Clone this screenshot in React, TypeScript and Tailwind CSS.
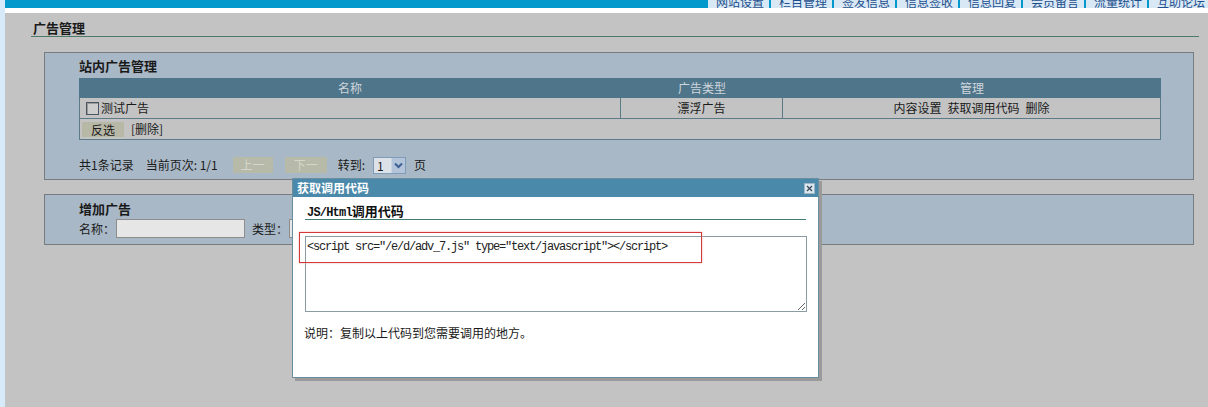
import React from "react";

const navItems = ["网站设置", "栏目管理", "签发信息", "信息签收", "信息回复", "会员留言", "流量统计", "互助论坛"];

export default function App() {
  return (
    <div className="relative flex w-[1208px] h-[407px] overflow-hidden bg-[#c3c3c3] text-[12px] leading-[14px] text-[#1a1a1a] font-['Noto_Sans_CJK_SC','Noto_Sans',sans-serif]">
      <div className="w-[5px] shrink-0 bg-[#d6eaf9]" />
      <div className="flex flex-col flex-1 min-w-0">
        <div className="flex h-[8px]">
          <div className="flex-1 bg-[#0399cc]" />
          <nav className="flex w-[502px] shrink-0 overflow-hidden bg-[#d9e8f5]">
            <div className="flex -mt-[4px] h-[12px]">
              {navItems.map((n) => (
                <span
                  key={n}
                  className="shrink-0 w-[63px] h-[12px] border-l-2 border-[#0399cc] pl-[8px] leading-[12px] text-[#1c4f8c] whitespace-nowrap"
                >
                  {n}
                </span>
              ))}
            </div>
          </nav>
        </div>
        <div className="h-[5px] bg-white" />
        <main className="pl-[26px]">
          <div className="w-[1168px] h-[24px] border-b border-[#4f7a69] pl-[2px] pt-[8px] text-[13px] font-bold">广告管理</div>

          <section className="ml-[13px] mt-[15px] w-[1150px] h-[128px] border border-[#777c80] bg-[#a9b8c6] pl-[34px]">
            <div className="h-[25px] pt-[6px] text-[13px] font-bold">站内广告管理</div>
            <div className="w-[1082px]">
              <div className="flex h-[20px] bg-[#4f758a] text-[#cfd6dc] leading-[20px]">
                <div className="w-[542px] text-center">名称</div>
                <div className="w-[162px] text-center">广告类型</div>
                <div className="flex-1 text-center">管理</div>
              </div>
              <div className="flex h-[21px] border border-t-0 border-[#5d7a89] bg-[#c3c3c3]">
                <div className="w-[541px] flex items-center pl-[6px] border-r border-[#5d7a89]">
                  <span className="w-[13px] h-[13px] border border-[#4a5560] bg-[#cdcdcd] shadow-[inset_1px_1px_0_#9a9a9a]" />
                  <span className="ml-[2px]">测试广告</span>
                </div>
                <div className="w-[162px] flex items-center justify-center border-r border-[#5d7a89]">漂浮广告</div>
                <div className="flex-1 flex items-center justify-center gap-[6px]">
                  <span>内容设置</span>
                  <span>获取调用代码</span>
                  <span>删除</span>
                </div>
              </div>
              <div className="flex items-center h-[21px] border border-t-0 border-[#5d7a89] bg-[#c3c3c3] pl-[2px]">
                <span className="w-[42px] h-[15px] bg-[#b8b8a6] text-center leading-[15px]">反选</span>
                <span className="ml-[7px]">[删除]</span>
              </div>
            </div>
            <div className="flex items-center mt-[16px] h-[18px]">
              <span>共1条记录</span>
              <span className="ml-[12px]">当前页次: 1/1</span>
              <span className="ml-[15px] w-[40px] h-[16px] bg-[#b7baa8] text-[#d4d7ca] text-center leading-[16px]">上一</span>
              <span className="ml-[12px] w-[42px] h-[16px] bg-[#b7baa8] text-[#d4d7ca] text-center leading-[16px]">下一</span>
              <span className="ml-[11px]">转到:</span>
              <span className="ml-[8px] flex w-[33px] h-[17px] border border-[#7f9db9] bg-[#dde2e8]">
                <span className="flex-1 pl-[3px] leading-[15px]">1</span>
                <span className="w-[14px] flex items-center justify-center bg-[#b3c3da] border-l border-[#c9d5e4]">
                  <svg width="9" height="7" viewBox="0 0 9 7">
                    <path d="M1 1.5 L4.5 5 L8 1.5" fill="none" stroke="#3d5f93" strokeWidth="2" />
                  </svg>
                </span>
              </span>
              <span className="ml-[8px]">页</span>
            </div>
          </section>

          <section className="ml-[13px] mt-[14px] w-[1150px] h-[51px] border border-[#777c80] bg-[#a9b8c6] pl-[34px]">
            <div className="h-[21px] pt-[7px] text-[13px] font-bold">增加广告</div>
            <div className="flex items-center mt-[3px] h-[19px]">
              <span>名称：</span>
              <span className="ml-[1px] w-[129px] h-[19px] border border-[#8d8d8d] bg-[#e6e6e6]" />
              <span className="ml-[7px]">类型：</span>
              <span className="ml-[1px] w-[120px] h-[19px] border border-[#8d8d8d] bg-[#e6e6e6]" />
            </div>
          </section>
        </main>
      </div>

      <div className="absolute left-[292px] top-[178px] w-[527px] h-[200px] border border-[#6a8ea0] bg-white shadow-[3px_3px_0_#9a9a9a]">
        <div className="flex items-center justify-between h-[18px] bg-[#4a89aa] pl-[4px] pr-[3px]">
          <span className="text-white font-bold leading-[18px]">获取调用代码</span>
          <span className="flex items-center justify-center w-[11px] h-[11px] bg-[#dce6ee] border border-[#9fb6c6]">
            <svg width="7" height="7" viewBox="0 0 7 7">
              <path d="M1 1 L6 6 M6 1 L1 6" stroke="#3a4a5a" strokeWidth="1.3" />
            </svg>
          </span>
        </div>
        <div className="ml-[12px] w-[501px] h-[23px] border-b border-[#3f7c78] pt-[7px] pl-[2px] font-bold text-[13px] text-[#111]">
          <span className="font-mono text-[12px] tracking-[-0.8px]">JS/Html</span>调用代码
        </div>
        <textarea
          readOnly
          value={'<script src="/e/d/adv_7.js" type="text/javascript"></script>'}
          className="block ml-[12px] mt-[16px] w-[502px] h-[76px] border border-[#8a9ba4] bg-white pl-[1px] pt-[3px] font-mono text-[12px] leading-[14px] tracking-[-1.2px] text-[#222] outline-none"
        />
        <div className="ml-[11px] mt-[14px]">说明：复制以上代码到您需要调用的地方。</div>
        <div className="absolute left-[6px] top-[53px] w-[403px] h-[31px] border border-[#d23a3a] shadow-[0_0_2px_#f0b0b0] pointer-events-none" />
      </div>
    </div>
  );
}
